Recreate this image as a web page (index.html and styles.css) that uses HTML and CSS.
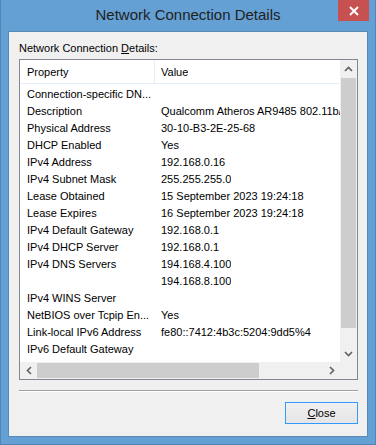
FILE: index.html
```html
<!DOCTYPE html>
<html lang="en">

<head>
  <title>Network Connection Details</title>
  <link rel="stylesheet" href="styles.css">
</head>

<body>
  <div class="window">
    <div class="titlebar">
      <span></span>
      <span class="title">Network Connection Details</span>
      <button class="close" aria-label="Close">
        <svg width="10" height="10" viewBox="0 0 10 10">
          <path d="M1 1 L9 9 M9 1 L1 9" stroke="#fff" stroke-width="2" />
        </svg>
      </button>
    </div>

    <div class="client">
      <div class="caption">Network Connection <u>D</u>etails:</div>

      <div class="listbox">
        <div class="viewport">
          <div class="row header">
            <div class="cell">Property</div>
            <div class="cell">Value</div>
          </div>
          <div class="row"><div class="cell">Connection-specific DN...</div><div class="cell"></div></div>
          <div class="row"><div class="cell">Description</div><div class="cell">Qualcomm Atheros AR9485 802.11b/g/n WiFi Adapter</div></div>
          <div class="row"><div class="cell">Physical Address</div><div class="cell">30-10-B3-2E-25-68</div></div>
          <div class="row"><div class="cell">DHCP Enabled</div><div class="cell">Yes</div></div>
          <div class="row"><div class="cell">IPv4 Address</div><div class="cell">192.168.0.16</div></div>
          <div class="row"><div class="cell">IPv4 Subnet Mask</div><div class="cell">255.255.255.0</div></div>
          <div class="row"><div class="cell">Lease Obtained</div><div class="cell">15 September 2023 19:24:18</div></div>
          <div class="row"><div class="cell">Lease Expires</div><div class="cell">16 September 2023 19:24:18</div></div>
          <div class="row"><div class="cell">IPv4 Default Gateway</div><div class="cell">192.168.0.1</div></div>
          <div class="row"><div class="cell">IPv4 DHCP Server</div><div class="cell">192.168.0.1</div></div>
          <div class="row"><div class="cell">IPv4 DNS Servers</div><div class="cell">194.168.4.100</div></div>
          <div class="row"><div class="cell"></div><div class="cell">194.168.8.100</div></div>
          <div class="row"><div class="cell">IPv4 WINS Server</div><div class="cell"></div></div>
          <div class="row"><div class="cell">NetBIOS over Tcpip En...</div><div class="cell">Yes</div></div>
          <div class="row"><div class="cell">Link-local IPv6 Address</div><div class="cell">fe80::7412:4b3c:5204:9dd5%4</div></div>
          <div class="row"><div class="cell">IPv6 Default Gateway</div><div class="cell"></div></div>
          <div class="row"><div class="cell">IPv6 DNS Server</div><div class="cell"></div></div>
        </div>

        <div class="vscroll">
          <div class="arrow">
            <svg width="9" height="6" viewBox="0 0 9 6"><path d="M1 5 L4.5 1.5 L8 5" /></svg>
          </div>
          <div class="track"><div class="thumb"></div></div>
          <div class="arrow">
            <svg width="9" height="6" viewBox="0 0 9 6"><path d="M1 1 L4.5 4.5 L8 1" /></svg>
          </div>
        </div>

        <div class="hscroll">
          <div class="arrow">
            <svg width="6" height="9" viewBox="0 0 6 9"><path d="M5 1 L1.5 4.5 L5 8" /></svg>
          </div>
          <div class="track"><div class="thumb"></div></div>
          <div class="arrow">
            <svg width="6" height="9" viewBox="0 0 6 9"><path d="M1 1 L4.5 4.5 L1 8" /></svg>
          </div>
        </div>

        <div class="corner"></div>
      </div>

      <div class="separator"></div>

      <div class="buttons">
        <button class="push"><u>C</u>lose</button>
      </div>
    </div>
  </div>
</body>

</html>
```

FILE: styles.css
```css
html,
body {
  margin: 0;
  height: 100%;
  overflow: hidden;
}

body {
  background: #64a0d4;
  font-family: "Liberation Sans", Arial, sans-serif;
  font-size: 11px;
  color: #000;
}

.window {
  width: 376px;
  height: 445px;
  box-sizing: border-box;
  border: 1px solid #4f86b8;
  border-top: none;
  background: #64a0d4;
  display: flex;
  flex-direction: column;
}

.titlebar {
  height: 31px;
  display: grid;
  grid-template-columns: 1fr auto 1fr;
  align-items: start;
}

.titlebar .title {
  font-size: 15px;
  color: #222;
  line-height: 30px;
  white-space: nowrap;
}

.close {
  justify-self: end;
  margin-right: 6px;
  width: 31px;
  height: 21px;
  border: none;
  padding: 0;
  background: #c75050;
  display: flex;
  align-items: center;
  justify-content: center;
}

.client {
  flex: 1;
  margin: 0 7px 7px;
  background: #f0f0f0;
  border: 1px solid #5889b6;
  padding: 9px 9px 0 10px;
  display: flex;
  flex-direction: column;
}

.caption {
  line-height: 15px;
  margin-bottom: 3px;
}

.caption u,
.push u {
  text-decoration-thickness: 1px;
  text-underline-offset: 1px;
}

.listbox {
  height: 321px;
  box-sizing: border-box;
  border: 1px solid #828790;
  background: #fff;
  display: grid;
  grid-template-columns: 1fr 17px;
  grid-template-rows: 1fr 17px;
}

.viewport {
  overflow: hidden;
  min-width: 0;
}

.row {
  display: flex;
  height: 17px;
  line-height: 17px;
  white-space: nowrap;
}

.row .cell {
  flex: none;
  box-sizing: border-box;
  padding-left: 6px;
  overflow: hidden;
}

.row .cell:first-child {
  width: 135px;
  padding-left: 7px;
}

.row.header {
  height: 24px;
  line-height: 24px;
  margin-bottom: 2px;
  border-bottom: 1px solid #e5eefa;
  box-sizing: border-box;
}

.row.header .cell:first-child {
  border-right: 1px solid #e5eefa;
}

.vscroll,
.hscroll {
  background: #f0f0f0;
  display: flex;
}

.vscroll {
  flex-direction: column;
}

.arrow {
  flex: none;
  width: 17px;
  height: 17px;
  display: flex;
  align-items: center;
  justify-content: center;
}

.arrow path {
  fill: none;
  stroke: #606060;
  stroke-width: 1.6;
}

.track {
  flex: 1;
  display: flex;
}

.vscroll .track {
  flex-direction: column;
  padding: 1px 1px 0;
}

.vscroll .thumb {
  height: 250px;
  background: #cdcdcd;
}

.hscroll .track {
  padding: 1px 0;
}

.hscroll .thumb {
  width: 222px;
  background: #cdcdcd;
}

.corner {
  background: #f0f0f0;
}

.separator {
  margin-top: 10px;
  height: 1px;
  background: #a0a0a0;
  border-bottom: 1px solid #fff;
}

.buttons {
  display: flex;
  justify-content: flex-end;
  margin-top: 10px;
}

.push {
  width: 73px;
  height: 22px;
  box-sizing: border-box;
  border: 1px solid #3399ff;
  background: linear-gradient(#f0f0f0, #e5e5e5);
  font-family: inherit;
  font-size: 11px;
  color: #000;
  padding: 0;
}
```
